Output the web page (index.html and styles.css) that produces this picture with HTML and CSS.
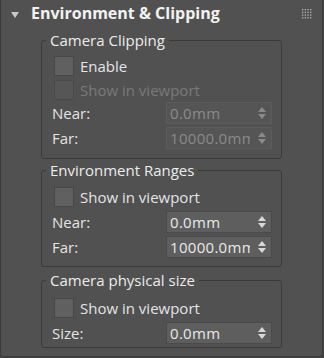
FILE: index.html
```html
<!DOCTYPE html>
<html>
<head>
<meta charset="utf-8">
<link rel="stylesheet" href="styles.css">
</head>
<body>
<div class="panel">
  <div class="header">
    <span class="tri"></span>
    <span class="title">Environment &amp; Clipping</span>
    <svg class="grip" width="10" height="10" viewBox="0 0 10 10">
      <g fill="#a8a8a8">
        <rect x="0" y="0" width="1.4" height="1.4"/><rect x="2.7" y="0" width="1.4" height="1.4"/><rect x="5.4" y="0" width="1.4" height="1.4"/><rect x="8.1" y="0" width="1.4" height="1.4"/>
        <rect x="0" y="2.7" width="1.4" height="1.4"/><rect x="2.7" y="2.7" width="1.4" height="1.4"/><rect x="5.4" y="2.7" width="1.4" height="1.4"/><rect x="8.1" y="2.7" width="1.4" height="1.4"/>
        <rect x="0" y="5.4" width="1.4" height="1.4"/><rect x="2.7" y="5.4" width="1.4" height="1.4"/><rect x="5.4" y="5.4" width="1.4" height="1.4"/><rect x="8.1" y="5.4" width="1.4" height="1.4"/>
        <rect x="0" y="8.1" width="1.4" height="1.4"/><rect x="2.7" y="8.1" width="1.4" height="1.4"/><rect x="5.4" y="8.1" width="1.4" height="1.4"/><rect x="8.1" y="8.1" width="1.4" height="1.4"/>
      </g>
    </svg>
  </div>

  <fieldset class="group g1">
    <legend>Camera Clipping</legend>
    <div class="check"><span class="box"></span><span>Enable</span></div>
    <div class="check disabled"><span class="box"></span><span>Show in viewport</span></div>
    <div class="field">
      <span class="lbl">Near:</span>
      <div class="spin disabled"><span class="val">0.0mm</span><span class="arrows"><i class="up"></i><i class="down"></i></span></div>
    </div>
    <div class="field">
      <span class="lbl">Far:</span>
      <div class="spin disabled"><span class="val">10000.0mm</span><span class="arrows"><i class="up"></i><i class="down"></i></span></div>
    </div>
  </fieldset>

  <fieldset class="group g2">
    <legend>Environment Ranges</legend>
    <div class="check"><span class="box"></span><span>Show in viewport</span></div>
    <div class="field">
      <span class="lbl">Near:</span>
      <div class="spin"><span class="val">0.0mm</span><span class="arrows"><i class="up"></i><i class="down"></i></span></div>
    </div>
    <div class="field">
      <span class="lbl">Far:</span>
      <div class="spin"><span class="val">10000.0mm</span><span class="arrows"><i class="up"></i><i class="down"></i></span></div>
    </div>
  </fieldset>

  <fieldset class="group g3">
    <legend>Camera physical size</legend>
    <div class="check"><span class="box"></span><span>Show in viewport</span></div>
    <div class="field">
      <span class="lbl">Size:</span>
      <div class="spin"><span class="val">0.0mm</span><span class="arrows"><i class="up"></i><i class="down"></i></span></div>
    </div>
  </fieldset>
</div>
</body>
</html>
```

FILE: styles.css
```css
html, body {
  margin: 0;
  padding: 0;
  background: #444444;
}
body {
  width: 324px;
  height: 358px;
  overflow: hidden;
  font-family: "Open Sans", "Noto Sans", sans-serif;
  font-size: 15px;
  color: #e4e4e4;
}
.panel {
  box-sizing: border-box;
  width: 323px;
  height: 357px;
  background: #515151;
  border: 1px solid #3b3b3b;
  border-top: none;
  border-radius: 0 0 3px 3px;
  display: flex;
  flex-direction: column;
}
.header {
  height: 30px;
  display: flex;
  align-items: flex-start;
}
.tri {
  width: 0;
  height: 0;
  border-left: 4px solid transparent;
  border-right: 4px solid transparent;
  border-top: 6px solid #c9c9c9;
  margin: 12px 0 0 10px;
}
.title {
  margin: 2px 0 0 12px;
  font-weight: 700;
  font-size: 16px;
  line-height: 22px;
  color: #f2f2f2;
}
.grip {
  margin: 9px 10px 0 auto;
}
.group {
  margin: 0 0 0 40px;
  width: 241px;
  box-sizing: border-box;
  border: 1px solid #3a3a3a;
  border-radius: 3px;
  padding: 6px 8px 9px 10px;
  display: flex;
  flex-direction: column;
  min-width: 0;
}
.group legend {
  padding: 0 4px;
  margin-left: -6px;
  line-height: 20px;
  font-size: 15px;
  color: #ececec;
}
.g2 {
  margin-top: 1px;
  padding-top: 7px;
  padding-bottom: 8px;
}
.g3 {
  margin-top: 3px;
  padding-top: 8px;
  padding-bottom: 3px;
}
.check {
  display: flex;
  align-items: center;
  height: 20px;
  margin-bottom: 4px;
  padding-left: 2px;
}
.check .box {
  box-sizing: border-box;
  width: 20px;
  height: 20px;
  background: #606060;
  border: 1px solid #474747;
  margin-right: 6px;
}
.check.disabled {
  color: #7a7a7a;
  margin-bottom: 2px;
}
.check.disabled .box {
  background: #565656;
  border-color: #4a4a4a;
}
.field {
  display: flex;
  align-items: center;
  height: 22px;
  margin-bottom: 3px;
}
.field:last-child {
  margin-bottom: 0;
}
.lbl {
  width: 114px;
  flex: none;
}
.spin {
  box-sizing: border-box;
  width: 106px;
  height: 22px;
  background: #5e5e5e;
  border: 1px solid #4a4a4a;
  display: flex;
  align-items: center;
  padding-left: 3px;
  color: #e8e8e8;
  overflow: hidden;
}
.spin .val {
  flex: 1;
  white-space: nowrap;
  overflow: hidden;
  line-height: 20px;
  letter-spacing: 0.3px;
}
.arrows {
  flex: none;
  width: 8px;
  margin: 0 5px 0 8px;
  display: flex;
  flex-direction: column;
  align-items: center;
  gap: 2px;
}
.arrows i {
  width: 0;
  height: 0;
  border-left: 4px solid transparent;
  border-right: 4px solid transparent;
}
.arrows .up {
  border-bottom: 5px solid #d8d8d8;
}
.arrows .down {
  border-top: 5px solid #d8d8d8;
}
.spin.disabled {
  background: #555555;
  border-color: #5c5c5c;
  color: #8a8a8a;
}
.spin.disabled .up {
  border-bottom-color: #8a8a8a;
}
.spin.disabled .down {
  border-top-color: #8a8a8a;
}
```
